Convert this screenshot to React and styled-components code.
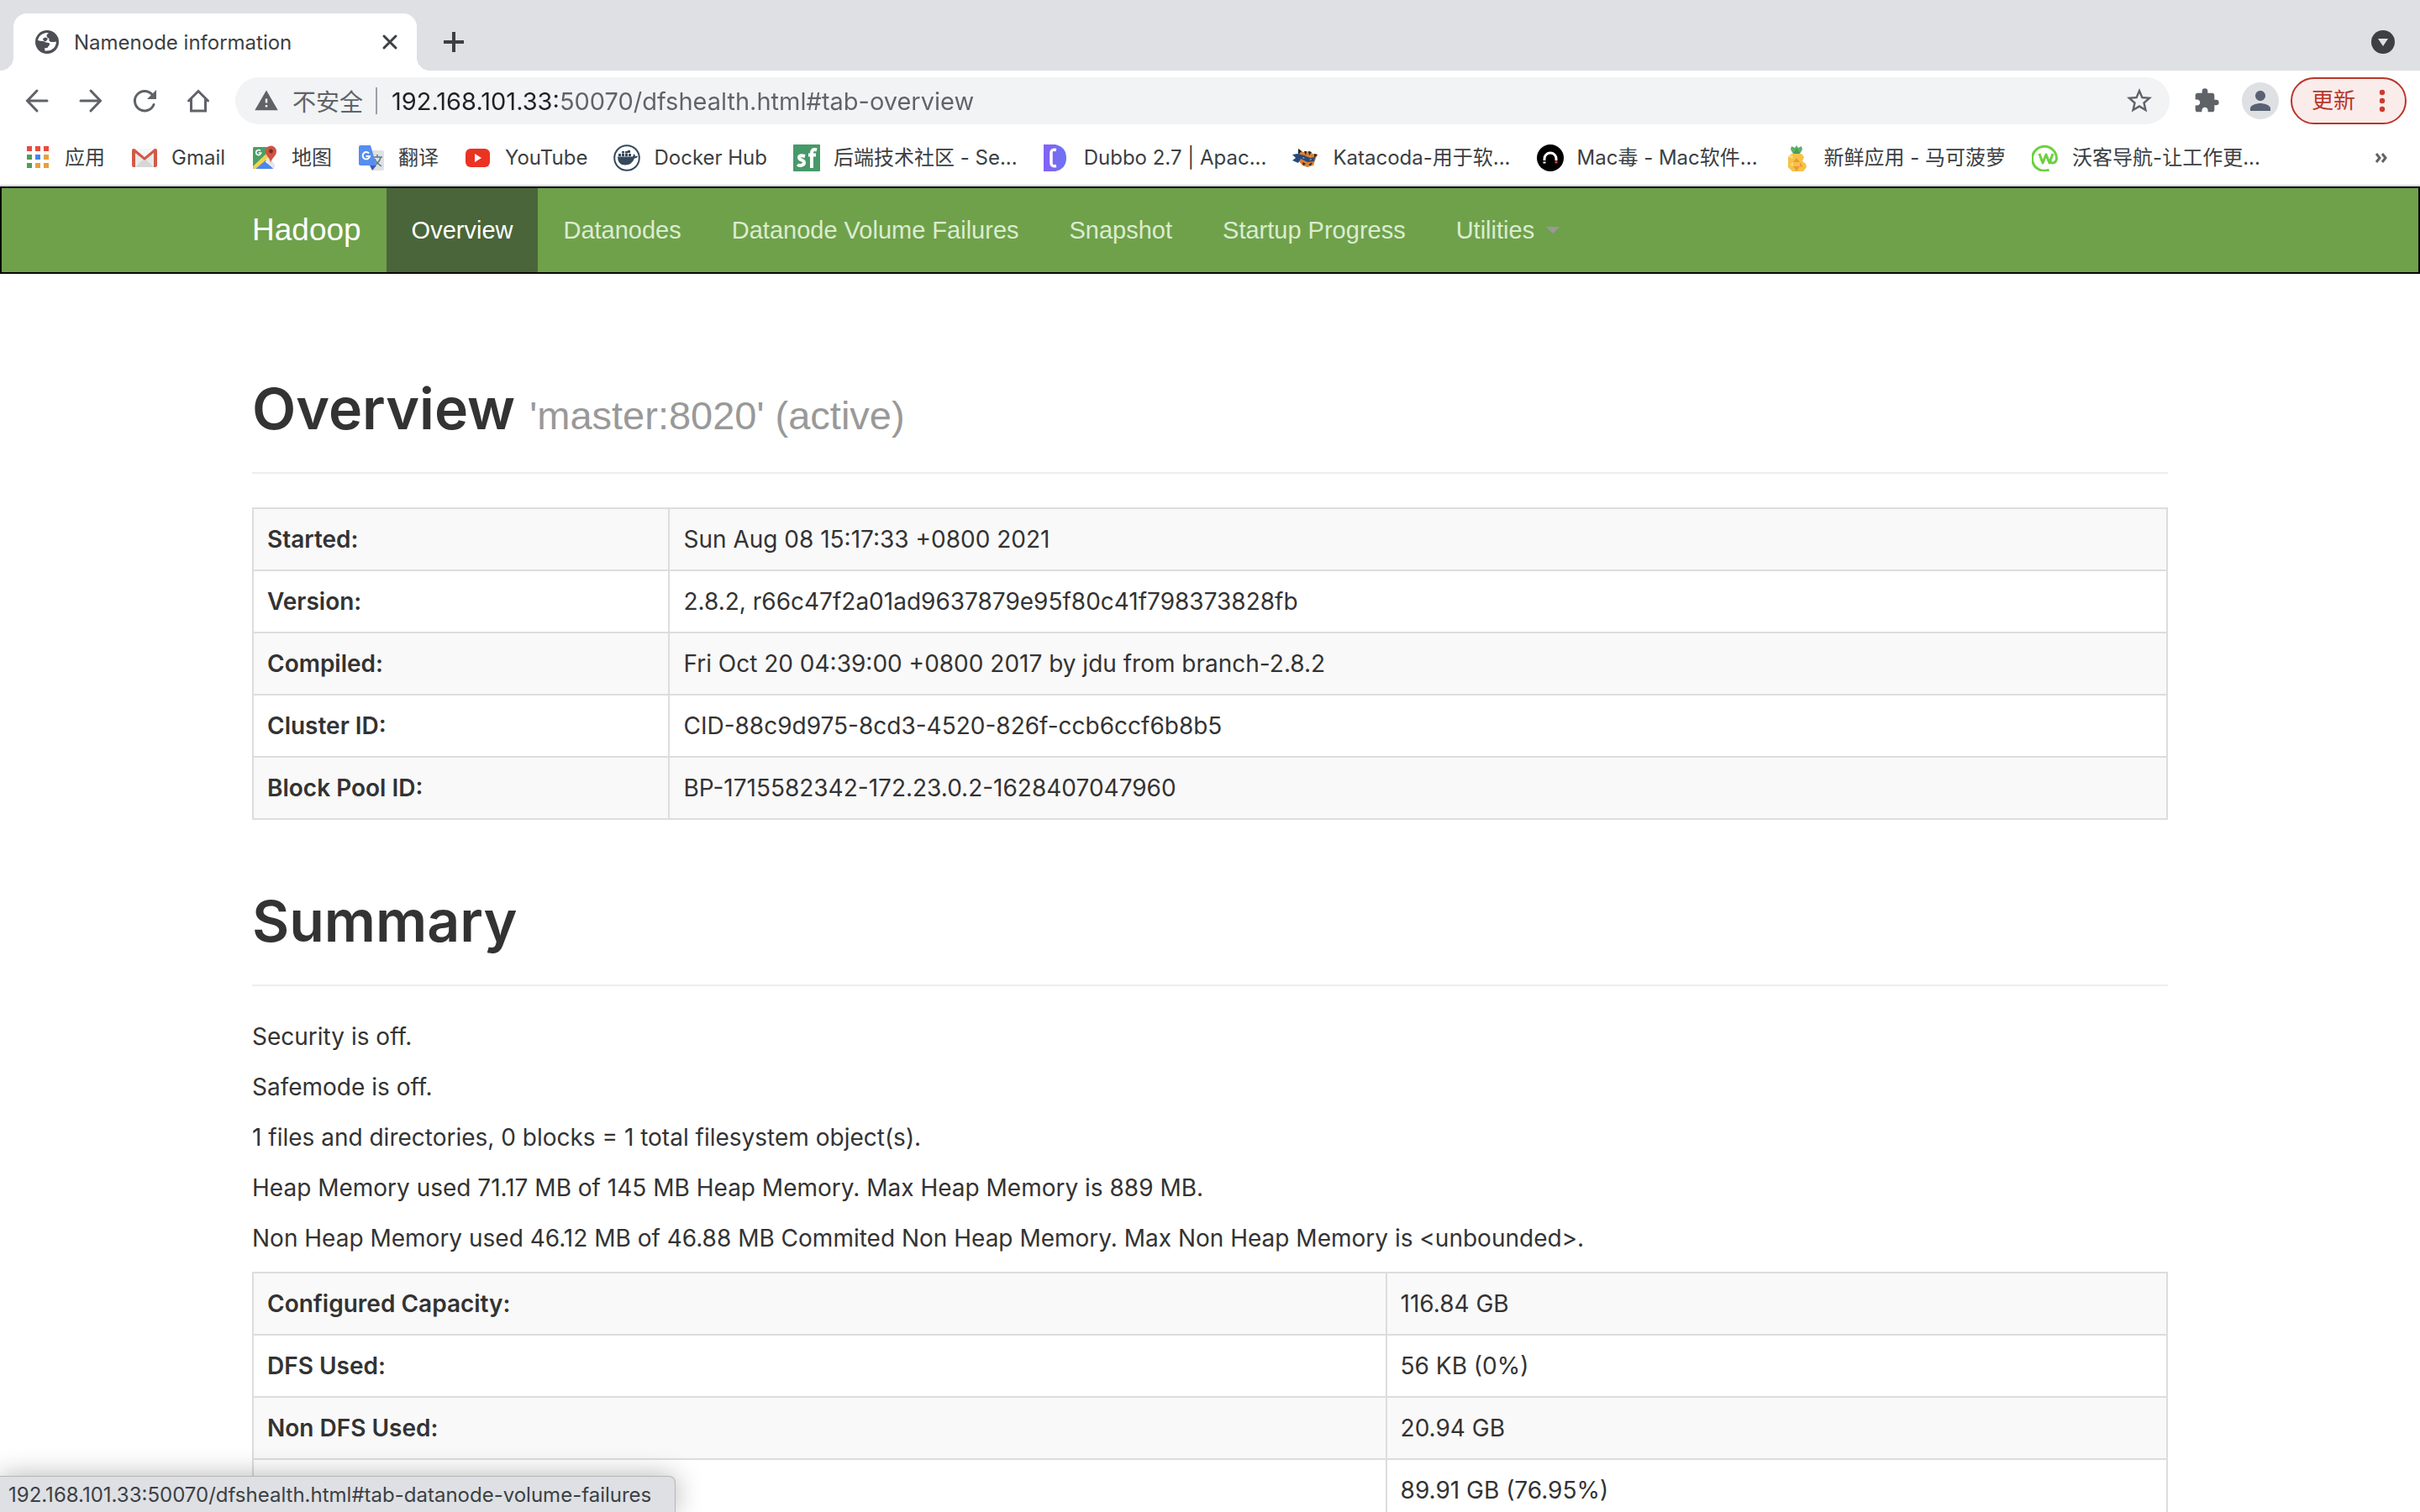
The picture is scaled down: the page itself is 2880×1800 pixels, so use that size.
import React, { useState } from 'react'
import styled, { createGlobalStyle } from 'styled-components';
import { MdExtension, MdPerson, MdStarBorder, MdWarning } from 'react-icons/md';

const uiFont = '"Inter", "Noto Sans CJK SC", sans-serif';
const navFont = '"Liberation Sans", "Noto Sans CJK SC", sans-serif';

const overviewRows = [
  ['Started:', 'Sun Aug 08 15:17:33 +0800 2021'],
  ['Version:', '2.8.2, r66c47f2a01ad9637879e95f80c41f798373828fb'],
  ['Compiled:', 'Fri Oct 20 04:39:00 +0800 2017 by jdu from branch-2.8.2'],
  ['Cluster ID:', 'CID-88c9d975-8cd3-4520-826f-ccb6ccf6b8b5'],
  ['Block Pool ID:', 'BP-1715582342-172.23.0.2-1628407047960'],
];

const summaryLines = [
  'Security is off.',
  'Safemode is off.',
  '1 files and directories, 0 blocks = 1 total filesystem object(s).',
  'Heap Memory used 71.17 MB of 145 MB Heap Memory. Max Heap Memory is 889 MB.',
  'Non Heap Memory used 46.12 MB of 46.88 MB Commited Non Heap Memory. Max Non Heap Memory is <unbounded>.',
];

const summaryRows = [
  ['Configured Capacity:', '116.84 GB'],
  ['DFS Used:', '56 KB (0%)'],
  ['Non DFS Used:', '20.94 GB'],
  ['', '89.91 GB (76.95%)'],
];

const navItems = ['Overview', 'Datanodes', 'Datanode Volume Failures', 'Snapshot', 'Startup Progress'];

const GlobeIcon = () => (
  <svg viewBox="0 0 28 28">
    <circle cx="14" cy="14" r="14" fill="#4d4f55" />
    <path fill="#fff" d="M3 12C4 7 8 3.500 14 3l2 .5q-3 1.500-2.500 3.500t3 3q-1 2 1 3.500 2.500 1 7.300 0c.5 6-5 12-13.300 11l-.5-3.500q4 1 4.500-2 2-1 1.500-3.500-2-1-4.500-1-2-2-4-1.500-2.500 0-5.500-1z" />
    <path fill="#4d4f55" d="M9 10q3-3 6 0l-2 3q-3 1-4-3z" />
  </svg>
)

const AppsIcon = () => (
  <svg viewBox="0 0 32 32">
    <path fill="#e94b3d" d="M3 2h6v6H3zM13 2h6v6h-6zM23 2h6v6h-6z" />
    <path fill="#549a5b" d="M3 12h6v6H3zM3 22h6v6H3z" />
    <path fill="#3f86f0" d="M13 12h6v6h-6z" />
    <path fill="#e6a23a" d="M23 12h6v6h-6zM13 22h6v6h-6zM23 22h6v6h-6z" />
  </svg>
)

const GmailIcon = () => (
  <svg viewBox="0 0 32 32">
    <path fill="#e9e9e9" d="M3 5h26v22H3z" />
    <path fill="#d6d6d6" d="M5 27l9-9 2 2 2-2 9 9z" />
    <path fill="#f6f6f6" d="M4 5h24L16 15z" />
    <path fill="#d15a48" d="M1 7q0-2 2-2h1l12 10L28 5h1q2 0 2 2v18q0 2-2 2h-2V10l-11 9L5 10v17H3q-2 0-2-2z" />
  </svg>
)

const MapsIcon = () => (
  <svg viewBox="0 0 32 32">
    <path fill="#4c9f62" d="M3 3h20l4 10L4 29H3q-1-1-1-2V5q0-2 1-2z" />
    <path fill="#4d86ec" d="M15 19l12 10H5z" />
    <path fill="#f6d44b" d="M2 26L20 9l4 4L5 29q-3 0-3-3z" />
    <path fill="#e6e6e6" d="M17 18l4-4 7 10v3l-2 2z" />
    <path fill="none" stroke="#fff" strokeWidth="1.6" d="M11 7.600a3 3 0 1 0 .7 2.400H8.700" />
    <path fill="#cf5443" d="M23 22c0-6-6-8-6-14a6 6 0 0 1 13 0c0 6-6 8-7 14z" />
    <circle cx="23.500" cy="8" r="2.400" fill="#7c2a22" />
  </svg>
)

const TranslateIcon = () => (
  <svg viewBox="0 0 32 32">
    <path fill="#dfe1e3" d="M12 7h17q2 0 2 2v20q0 2-2 2H18z" />
    <path fill="none" stroke="#5c7b8b" strokeWidth="1.500" d="M18 15h11M23 12v3M27 15c-1 5-4 8-8 10M20 17c1 4 5 7 8 9" />
    <path fill="#3c58b8" d="M14 25h8l-5 6z" />
    <path fill="#568df0" d="M3 1h12l7 24H3q-2 0-2-2V3q0-2 2-2z" />
    <path fill="none" stroke="#fff" strokeWidth="2" d="M13 10.500a4.200 4.200 0 1 0 1 3.500H9.500" />
  </svg>
)

const YoutubeIcon = () => (
  <svg viewBox="0 0 32 32">
    <rect x="1" y="5" width="29" height="22" rx="6" fill="#ea3323" />
    <path fill="#fff" d="M12 11l8 5-8 5z" />
  </svg>
)

const DockerIcon = () => (
  <svg viewBox="0 0 32 32">
    <circle cx="16" cy="16" r="14.800" fill="#fff" stroke="#35495d" strokeWidth="2" />
    <path fill="#35495d" d="M6 11h3v3H6zM10 11h3v3h-3zM10 8h3v2.500h-3zM14 11h3v3h-3zM14 8h3v2.500h-3zM18 11h3v3h-3zM17 7h3v3h-3z" />
    <path fill="#35495d" d="M5 14.500h18q1-2 1-3.500 2 1 2 3 2-.5 3 .5-1 2-4 2-3 8-11 8-9 0-9-10z" />
  </svg>
)

const SegmentIcon = () => (
  <svg viewBox="0 0 32 32">
    <rect width="32" height="32" rx="1" fill="#469a69" />
    <path fill="none" stroke="#fff" strokeWidth="4" d="M14 14q-7-2-7 1.500c0 3.500 6 2.500 6 6 0 4-6 4-8 2.500M28 6.500q-6-2-6 4V28M18 12.500h9" />
  </svg>
)

const DubboIcon = () => (
  <svg viewBox="0 0 32 32">
    <defs>
      <linearGradient id="dubbo">
        <stop offset="0" stopColor="#8461f6" />
        <stop offset="1" stopColor="#6c74f2" />
      </linearGradient>
    </defs>
    <path fill="url(#dubbo)" d="M0 0h14q13 3 13 16T14 32H0z" />
    <path fill="none" stroke="#fff" strokeWidth="3.500" d="M15 6.500q-6-1-6 3v13q0 4 6 3" />
  </svg>
)

const KatacodaIcon = () => (
  <svg viewBox="0 0 32 32">
    <path fill="#d98237" d="M7 5l6 4 8-1 3 3 6 1-3 7-2 6-7 2-6-2-5-6z" />
    <path fill="#23262b" d="M7 5l4 3-4 4zM14 8l2 5 1-5zM19 8l1 5 3-4zM26 11l4 1-4 4zM12 21l4 2-3 2zM19 24l5-3-2 4z" />
    <path fill="#254a7c" d="M0 12l6-1 8 2 7 3 6-1-1 5-8 1-8-4-3 5-7-3 4-3z" />
    <path fill="#e9a35f" d="M12 15l3 1-2 1zM20 18l3-1-1 2z" />
  </svg>
)

const MacduIcon = () => (
  <svg viewBox="0 0 32 32">
    <circle cx="16" cy="16" r="16" fill="#000" />
    <path fill="none" stroke="#fff" strokeWidth="3" d="M9 19v-2a7 7 0 0 1 14 0v2" />
    <path fill="#fff" d="M7.500 20.500h3v2h-3z" />
    <path fill="#e23a2c" d="M21.500 19.500h3v3h-3z" />
  </svg>
)

const PineappleIcon = () => (
  <svg viewBox="0 0 32 32">
    <path fill="#5fae6c" d="M9 2l4 2 2-3 2 3 4-2 1 4-3 5h-8L8 6z" />
    <path fill="#4b9a59" d="M11 11l4-7 4 7z" />
    <path fill="#f6c245" d="M9 11h12l3 4-2 5 4 3 1 4-4 5H10l-5-5V15z" />
    <path fill="#f0973c" d="M15 16l4 5h-8zM15 32l-4-6h8zM19 21l4 6-4-1z" />
    <path fill="#fbd978" d="M5 15l5-3 1 5zM7 24l4-3v5z" />
  </svg>
)

const WokeIcon = () => (
  <svg viewBox="0 0 32 32">
    <path fill="none" stroke="#6bd13f" strokeWidth="3" d="M20.500 30.200A14.500 14.500 0 1 1 29.500 17c-.5 6-6.500 6-7.500 3" />
    <path fill="none" stroke="#6bd13f" strokeWidth="3" strokeLinejoin="round" d="M9 11l4 11 4-10 4 10 4-11" />
  </svg>
)

const bookmarks = [
  { label: '应用', Icon: AppsIcon },
  { label: 'Gmail', Icon: GmailIcon },
  { label: '地图', Icon: MapsIcon },
  { label: '翻译', Icon: TranslateIcon },
  { label: 'YouTube', Icon: YoutubeIcon },
  { label: 'Docker Hub', Icon: DockerIcon },
  { label: '后端技术社区 - Se...', Icon: SegmentIcon },
  { label: 'Dubbo 2.7 | Apac...', Icon: DubboIcon },
  { label: 'Katacoda-用于软...', Icon: KatacodaIcon },
  { label: 'Mac毒 - Mac软件...', Icon: MacduIcon },
  { label: '新鲜应用 - 马可菠萝', Icon: PineappleIcon },
  { label: '沃客导航-让工作更...', Icon: WokeIcon },
];

const InfoTable = ({ rows, labelWidth }) => (
  <Table>
    <tbody>
      {rows.map(([label, value]) => (
        <tr key={value}>
          <LabelCell scope="row" $width={labelWidth}>{label}</LabelCell>
          <td>{value}</td>
        </tr>
      ))}
    </tbody>
  </Table>
)

const App = () => {

  const [url, setUrl] = useState('192.168.101.33:50070/dfshealth.html#tab-overview');
  const [active, setActive] = useState('Overview');

  return (
    <Window>
      <GlobalStyle />
      <TabStrip>
        <Tab>
          <GlobeIcon />
          <TabTitle>Namenode information</TabTitle>
          <TabButton aria-label="Close tab">
            <svg viewBox="0 0 32 32"><path d="M9 9l14 14M23 9L9 23" /></svg>
          </TabButton>
        </Tab>
        <NewTabButton aria-label="New tab">
          <svg viewBox="0 0 32 32"><path d="M16 4v24M4 16h24" /></svg>
        </NewTabButton>
        <TabSearch aria-label="Search tabs">
          <svg viewBox="0 0 28 28"><path d="M8 10h12l-6 9z" /></svg>
        </TabSearch>
      </TabStrip>

      <Toolbar>
        <NavButtons>
          <ToolButton aria-label="Back">
            <svg viewBox="0 0 32 32"><path d="M28 16H5M16 4L4.500 16 16 28" /></svg>
          </ToolButton>
          <ToolButton aria-label="Forward">
            <svg viewBox="0 0 32 32"><path d="M4 16h23M16 4l11.500 12L16 28" /></svg>
          </ToolButton>
          <ToolButton aria-label="Reload">
            <svg viewBox="0 0 32 32">
              <path d="M27 20.500A11.700 11.700 0 1 1 25 8.500" />
              <path className="solid" d="M30 3v11H19z" />
            </svg>
          </ToolButton>
          <ToolButton aria-label="Home">
            <svg viewBox="0 0 32 32"><path d="M4.500 16L16 4.500 27.500 16M7.500 14v14h17V14" /></svg>
          </ToolButton>
        </NavButtons>
        <Omnibox>
          <MdWarning />
          <Security>不安全</Security>
          <Divider />
          <UrlInput aria-label="Address" value={url} onChange={(e) => setUrl(e.target.value)} />
          <StarButton aria-label="Bookmark this page"><MdStarBorder /></StarButton>
        </Omnibox>
        <ExtensionButton aria-label="Extensions"><MdExtension /></ExtensionButton>
        <Avatar aria-label="Profile"><MdPerson /></Avatar>
        <UpdateButton>
          更新
          <svg viewBox="0 0 8 28">
            <circle cx="4" cy="4" r="3.200" />
            <circle cx="4" cy="14" r="3.200" />
            <circle cx="4" cy="24" r="3.200" />
          </svg>
        </UpdateButton>
      </Toolbar>

      <BookmarkBar>
        {bookmarks.map(({ label, Icon }) => (
          <Bookmark href="#" key={label}>
            <Icon />
            <span>{label}</span>
          </Bookmark>
        ))}
        <MoreButton aria-label="More bookmarks">
          <svg viewBox="0 0 16 16"><path d="M2 3l4 5-4 5M9 3l4 5-4 5" /></svg>
        </MoreButton>
      </BookmarkBar>

      <Page>
        <Navbar>
          <NavInner>
            <Brand href="#">Hadoop</Brand>
            {navItems.map((item) => (
              <NavLink href="#" key={item} $active={item === active} onClick={() => setActive(item)}>{item}</NavLink>
            ))}
            <NavLink href="#">Utilities<Caret /></NavLink>
          </NavInner>
        </Navbar>
        <Container>
          <PageHeader>
            <h1>Overview <small>'master:8020' (active)</small></h1>
          </PageHeader>
          <InfoTable rows={overviewRows} labelWidth="21.75%" />
          <PageHeader>
            <h1>Summary</h1>
          </PageHeader>
          {summaryLines.map((line) => (
            <Line key={line}>{line}</Line>
          ))}
          <InfoTable rows={summaryRows} labelWidth="59.2%" />
        </Container>
      </Page>
      <StatusBubble>192.168.101.33:50070/dfshealth.html#tab-datanode-volume-failures</StatusBubble>
    </Window>
  )
}

const GlobalStyle = createGlobalStyle`
  * {
    box-sizing : border-box;
  }
  body {
    margin : 0;
    background-color : white;
    font-family : ${uiFont};
  }
  button {
    display : flex;
    align-items : center;
    justify-content : center;
    padding : 0;
    border : none;
    background : none;
    font-family : inherit;
    cursor : pointer;
  }
  a {
    text-decoration : none;
  }
`

const Window = styled.div`
  position : relative;
  display : flex;
  flex-direction : column;
  height : 100vh;
  overflow : hidden;
`

const TabStrip = styled.div`
  display : flex;
  align-items : center;
  flex-shrink : 0;
  height : 84px;
  padding : 16px 30px 0 16px;
  background-color : #dee0e4;
`

const Tab = styled.div`
  position : relative;
  display : flex;
  align-items : center;
  gap : 18px;
  width : 480px;
  height : 68px;
  padding : 0 16px 0 26px;
  border-radius : 16px 16px 0 0;
  background-color : white;
  > svg {
    width : 28px;
    height : 28px;
  }
  &::before, &::after {
    content : '';
    position : absolute;
    bottom : 0;
    width : 16px;
    height : 16px;
  }
  &::before {
    left : -16px;
    background : radial-gradient(circle at 0 0, transparent 16px, white 16px);
  }
  &::after {
    right : -16px;
    background : radial-gradient(circle at 100% 0, transparent 16px, white 16px);
  }
`

const TabTitle = styled.span`
  flex : 1;
  font-size : 24px;
  color : #3c4043;
`

const TabButton = styled.button`
  width : 32px;
  height : 32px;
  svg {
    width : 32px;
    height : 32px;
    fill : none;
    stroke : #3c4043;
    stroke-width : 3;
    stroke-linecap : round;
  }
`

const NewTabButton = styled(TabButton)`
  margin-left : 28px;
  svg {
    stroke-width : 4;
    stroke-linecap : butt;
  }
`

const TabSearch = styled.button`
  width : 28px;
  height : 28px;
  margin-left : auto;
  border-radius : 50%;
  background-color : #3c4043;
  svg {
    width : 28px;
    height : 28px;
    fill : #dee0e4;
  }
`

const Toolbar = styled.div`
  display : flex;
  align-items : center;
  flex-shrink : 0;
  height : 72px;
  padding : 0 16px 0 28px;
`

const NavButtons = styled.div`
  display : flex;
  gap : 32px;
  margin-right : 28px;
`

const ToolButton = styled.button`
  width : 32px;
  height : 32px;
  svg {
    width : 32px;
    height : 32px;
    fill : none;
    stroke : #5f6368;
    stroke-width : 3;
    stroke-linecap : round;
  }
  .solid {
    fill : #5f6368;
    stroke : none;
  }
`

const Omnibox = styled.div`
  display : flex;
  align-items : center;
  flex : 1;
  height : 56px;
  padding : 0 18px 0 22px;
  border-radius : 28px;
  background-color : #f1f3f4;
  color : #5f6368;
  > svg {
    width : 30px;
    height : 30px;
  }
`

const Security = styled.span`
  margin-left : 16px;
  font-size : 28px;
`

const Divider = styled.span`
  width : 2px;
  height : 32px;
  margin : 0 17px 0 15px;
  background-color : #9aa0a6;
`

const UrlInput = styled.input`
  flex : 1;
  min-width : 0;
  padding : 0;
  border : none;
  outline : none;
  background : linear-gradient(90deg, #202124 198px, #5f6368 198px);
  -webkit-background-clip : text;
  background-clip : text;
  -webkit-text-fill-color : transparent;
  font-family : inherit;
  font-size : 29px;
  color : #5f6368;
`

const StarButton = styled.button`
  color : #5f6368;
  svg {
    width : 36px;
    height : 36px;
  }
`

const ExtensionButton = styled.button`
  margin-left : 28px;
  color : #5f6368;
  svg {
    width : 32px;
    height : 32px;
  }
`

const Avatar = styled.button`
  width : 44px;
  height : 44px;
  margin : 0 14px 0 26px;
  border-radius : 50%;
  background-color : #dee0e4;
  color : #596173;
  svg {
    width : 36px;
    height : 36px;
  }
`

const UpdateButton = styled.button`
  gap : 28px;
  width : 138px;
  height : 56px;
  border : 2px solid #bb3529;
  border-radius : 28px;
  background-color : #f9eceb;
  font-size : 26px;
  line-height : 28px;
  color : #bb3529;
  svg {
    width : 8px;
    height : 28px;
    fill : #cb3d2f;
  }
`

const BookmarkBar = styled.div`
  display : flex;
  align-items : center;
  flex-shrink : 0;
  gap : 31px;
  height : 66px;
  padding : 0 38px 0 29px;
  border-bottom : 2px solid #d6d8e0;
`

const Bookmark = styled.a`
  display : flex;
  align-items : center;
  gap : 16px;
  font-size : 24px;
  line-height : 32px;
  white-space : nowrap;
  color : #3c4043;
  svg {
    width : 32px;
    height : 32px;
  }
`

const MoreButton = styled.button`
  margin-left : auto;
  svg {
    width : 16px;
    height : 16px;
    fill : none;
    stroke : #5f6368;
    stroke-width : 3;
  }
`

const Page = styled.main`
  flex : 1;
  min-height : 0;
  overflow : hidden;
  font-size : 28px;
  line-height : 40px;
  color : #333;
`

const Navbar = styled.nav`
  border : 2px solid #080808;
  background-color : #6fa14b;
  font-family : ${navFont};
  font-size : 29px;
`

const NavInner = styled.div`
  display : flex;
  max-width : 2340px;
  margin : 0 auto;
  padding : 0 30px;
`

const Brand = styled.a`
  padding : 30px 30px 30px 0;
  font-size : 37px;
  color : white;
`

const NavLink = styled.a`
  display : flex;
  align-items : center;
  padding : 30px;
  background-color : ${(props) => (props.$active ? '#4a6539' : 'transparent')};
  color : ${(props) => (props.$active ? 'white' : '#dcecd0')};
`

const Caret = styled.span`
  margin-left : 14px;
  border-top : 8px solid #999;
  border-left : 8px solid transparent;
  border-right : 8px solid transparent;
`

const Container = styled.div`
  max-width : 2340px;
  margin : 0 auto;
  padding : 40px 30px;
`

const PageHeader = styled.header`
  margin : 80px 0 40px;
  padding-bottom : 18px;
  border-bottom : 2px solid #eee;
  h1 {
    margin : 0 0 18px;
    font-size : 68px;
    font-weight : 600;
    line-height : 80px;
  }
  small {
    font-family : ${navFont};
    font-size : 47px;
    font-weight : 400;
    line-height : 40px;
    color : #999;
  }
`

const Line = styled.p`
  margin : 0 0 20px;
`

const Table = styled.table`
  width : 100%;
  table-layout : fixed;
  border-collapse : collapse;
  th, td {
    padding : 16px;
    border : 2px solid #ddd;
    text-align : left;
  }
  tr:nth-child(odd) {
    background-color : #f9f9f9;
  }
`

const LabelCell = styled.th`
  width : ${(props) => props.$width};
  font-weight : 600;
`

const StatusBubble = styled.div`
  position : absolute;
  left : 0;
  bottom : 0;
  padding : 6px 28px 4px 10px;
  border-top : 1px solid #b4b6ba;
  border-right : 1px solid #b4b6ba;
  border-radius : 0 8px 0 0;
  background-color : #dee0e4;
  box-shadow : 0 0 32px rgba(0, 0, 0, 0.3);
  font-size : 24px;
  line-height : 32px;
  color : #3c4043;
`

export default App
